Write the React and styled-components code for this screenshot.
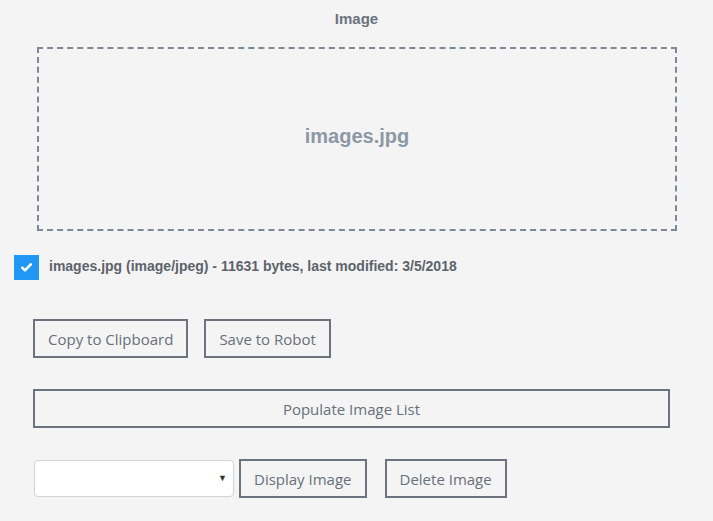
import React from 'react'
import styled, { createGlobalStyle } from 'styled-components'

const GlobalStyle = createGlobalStyle`
  html, body {
    margin: 0;
    padding: 0;
    background: #f4f4f4;
  }
  body {
    font-family: "Liberation Sans", Arial, sans-serif;
  }
`

const Page = styled.div`
  width: 713px;
  height: 521px;
  box-sizing: border-box;
  padding: 10px 0 0 0;
  overflow: hidden;
`

const Title = styled.h4`
  margin: 0;
  text-align: center;
  font-size: 15px;
  font-weight: bold;
  color: #6c737c;
  line-height: 17px;
`

const DropZone = styled.div`
  margin: 20px 36px 0 37px;
  height: 184px;
  box-sizing: border-box;
  border: 2px dashed #7d8996;
  padding-bottom: 6px;
  display: flex;
  align-items: center;
  justify-content: center;
  font-size: 20px;
  font-weight: bold;
  color: #8c98a6;
`

const FileRow = styled.label`
  display: flex;
  align-items: center;
  gap: 10px;
  margin: 24px 0 0 14px;
  font-size: 14px;
  font-weight: bold;
  color: #5d636b;
`

const FileText = styled.span`
  position: relative;
  top: -2px;
`

const Check = styled.span`
  width: 25px;
  height: 25px;
  background: #2196f3;
  display: flex;
  align-items: center;
  justify-content: center;
`

const ButtonRow = styled.div`
  display: flex;
  align-items: center;
  gap: ${p => p.gap || 16}px;
  margin: ${p => p.top}px 0 0 ${p => p.left || 33}px;
`

const Button = styled.button`
  height: 39px;
  box-sizing: border-box;
  padding: 0 13px;
  background: transparent;
  border: 2px solid #6c737e;
  border-radius: 0;
  font-family: "Open Sans", sans-serif;
  font-size: 15px;
  color: #68707a;
  width: ${p => (p.wide ? '637px' : 'auto')};
  margin-left: ${p => p.shift || 0}px;
`

const SelectWrap = styled.div`
  position: relative;
  width: 200px;
  height: 37px;
  box-sizing: border-box;
  background: #fff;
  border: 1px solid #ced4da;
  border-radius: 4px;
  margin-right: -11px;
`

const Caret = styled.span`
  position: absolute;
  right: 6px;
  top: 12px;
  font-size: 9px;
  color: #333;
`

export default function App() {
  return (
    <Page>
      <GlobalStyle />
      <Title>Image</Title>
      <DropZone>images.jpg</DropZone>
      <FileRow>
        <Check>
          <svg width="11" height="9" viewBox="0 0 11 9">
            <path d="M1.2 4.6 L4 7.4 L9.8 1.4" fill="none" stroke="#fff" strokeWidth="2.6" strokeLinecap="round" strokeLinejoin="round" />
          </svg>
        </Check>
        <FileText>images.jpg (image/jpeg) - 11631 bytes, last modified: 3/5/2018</FileText>
      </FileRow>
      <ButtonRow top={39}>
        <Button>Copy to Clipboard</Button>
        <Button>Save to Robot</Button>
      </ButtonRow>
      <ButtonRow top={31}>
        <Button wide>Populate Image List</Button>
      </ButtonRow>
      <ButtonRow top={31} left={34} gap={16}>
        <SelectWrap>
          <Caret>▼</Caret>
        </SelectWrap>
        <Button>Display Image</Button>
        <Button shift={2}>Delete Image</Button>
      </ButtonRow>
    </Page>
  )
}
